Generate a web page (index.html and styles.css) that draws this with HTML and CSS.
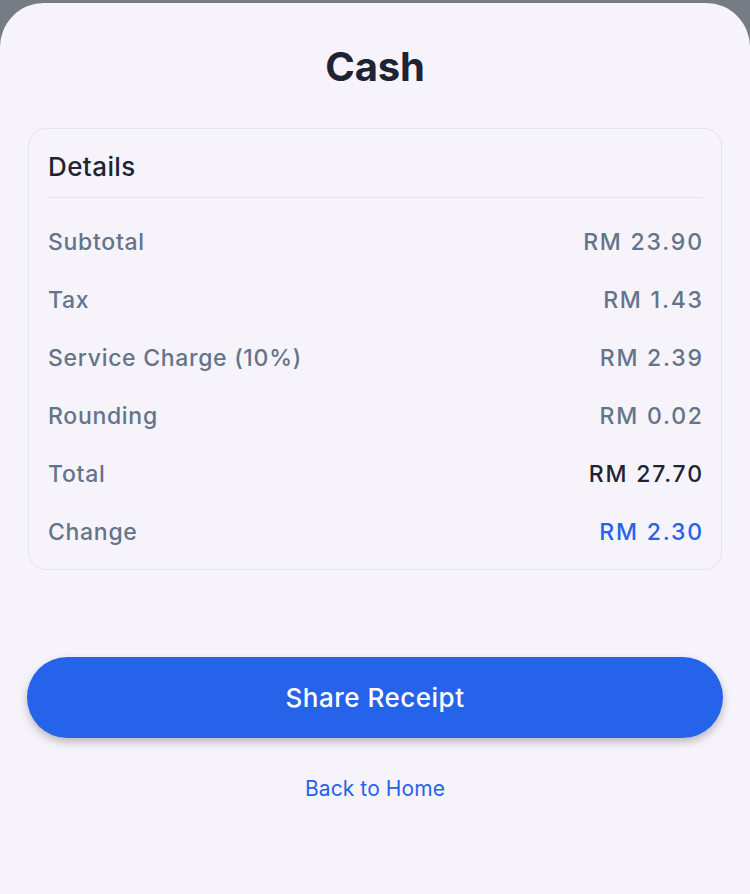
FILE: index.html
```html
<!DOCTYPE html>
<html>
<head>
<meta charset="utf-8">
<link rel="stylesheet" href="styles.css">
</head>
<body>
<div class="sheet">
  <h1 class="title">Cash</h1>
  <div class="card">
    <div class="card-head">Details</div>
    <div class="rows">
      <div class="row"><span>Subtotal</span><span class="num">RM 23.90</span></div>
      <div class="row"><span>Tax</span><span class="num">RM 1.43</span></div>
      <div class="row"><span>Service Charge (10%)</span><span class="num">RM 2.39</span></div>
      <div class="row"><span>Rounding</span><span class="num">RM 0.02</span></div>
      <div class="row"><span>Total</span><span class="num strong">RM 27.70</span></div>
      <div class="row"><span>Change</span><span class="num accent">RM 2.30</span></div>
    </div>
  </div>
  <button class="primary">Share Receipt</button>
  <a class="link">Back to Home</a>
</div>
</body>
</html>
```
FILE: styles.css
```css
html, body {
  margin: 0;
  padding: 0;
  height: 100%;
}
body {
  background: #777b83;
  font-family: Inter, "Noto Sans", sans-serif;
  padding-top: 3px;
  box-sizing: border-box;
}
.sheet {
  background: #f7f3fa;
  border-radius: 44px 44px 0 0;
  min-height: 891px;
  padding: 0 28px;
  display: flex;
  flex-direction: column;
  align-items: stretch;
}
.title {
  margin: 0;
  padding-top: 40px;
  height: 48px;
  line-height: 48px;
  text-align: center;
  font-size: 40px;
  font-weight: 700;
  color: #1e2433;
  letter-spacing: -0.2px;
  margin-bottom: 37px;
}
.card {
  border: 1px solid #e1e4ea;
  border-radius: 18px;
  padding: 0 19px 8px;
}
.card-head {
  padding: 22px 0 14px;
  line-height: 32px;
  font-size: 26px;
  font-weight: 500;
  color: #1e2433;
  letter-spacing: 0.4px;
  border-bottom: 1.5px solid #e1e4ea;
  margin-bottom: 15px;
}
.row {
  height: 58px;
  display: flex;
  justify-content: space-between;
  align-items: center;
  font-size: 23px;
  color: #64748b;
  font-weight: 500;
  letter-spacing: 0.7px;
}
.row .num {
  letter-spacing: 1.8px;
  margin-right: -1.8px;
}
.row .strong {
  color: #1e2433;
}
.row .accent {
  color: #2563eb;
}
.primary {
  margin-top: 87px;
  margin-left: -1px;
  margin-right: -1px;
  height: 81px;
  border: none;
  border-radius: 41px;
  background: #2563eb;
  color: #fff;
  font-family: inherit;
  font-size: 26px;
  font-weight: 500;
  letter-spacing: 0.5px;
  box-shadow: 0 4px 8px rgba(0,0,0,0.25);
}
.link {
  margin-top: 38px;
  text-align: center;
  color: #2563eb;
  font-size: 21px;
  line-height: 26px;
  letter-spacing: 0.1px;
}
```
